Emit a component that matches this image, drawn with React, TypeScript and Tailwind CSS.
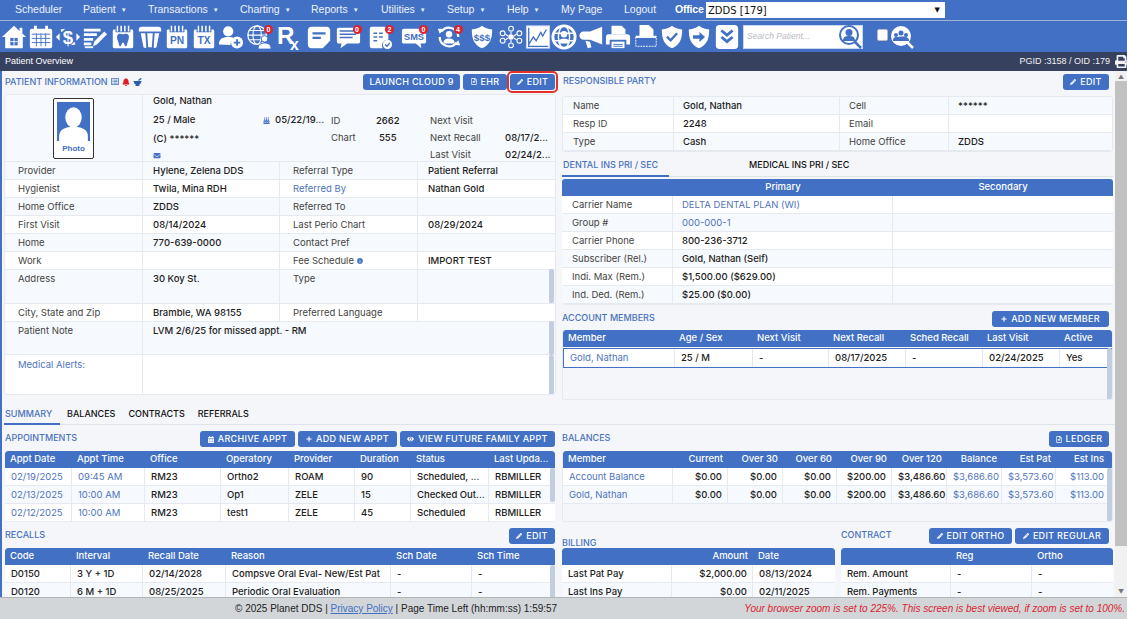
import type { ReactNode } from 'react';
import {
  FaBell, FaBirthdayCake, FaBullhorn, FaCalendarAlt, FaEnvelope, FaEye, FaInfoCircle,
  FaMortarPestle, FaPencilAlt, FaPlus, FaPrint, FaRegFileAlt, FaRegListAlt,
} from 'react-icons/fa';

const BLUE = '#4170c4';

const menu = [
  ['Scheduler', false], ['Patient', true], ['Transactions', true], ['Charting', true], ['Reports', true],
  ['Utilities', true], ['Setup', true], ['Help', true], ['My Page', false], ['Logout', false],
] as const;

const Ico = ({ children }: { children: ReactNode }) => (
  <svg viewBox="0 0 28 28" className="w-[26px] h-[26px]" fill="#fff">{children}</svg>
);

const Comb = () => (
  <>
    <rect x="3" y="6" width="22" height="20" rx="1.5" />
    <path d="M8 2v7M12 2v7M16 2v7M20 2v7" stroke={BLUE} strokeWidth="4" />
    <path d="M8 2v6M12 2v6M16 2v6M20 2v6" stroke="#fff" strokeWidth="1.6" />
  </>
);

const Shield = ({ children }: { children?: ReactNode }) => (
  <>
    <path d="M14 2c3 2.500 6.500 3.500 11 3.800 0 10-2.500 16.700-11 20.200C5.500 22.500 3 15.800 3 5.800 7.500 5.500 11 4.500 14 2z" />
    {children}
  </>
);

const Badge = ({ n }: { n: number }) => (
  <span className="absolute top-[1px] right-[-1px] w-[9px] h-[9px] rounded-full bg-[#d9232e] text-white text-[7px] leading-[9px] text-center font-bold font-['Liberation_Sans']">
    {n}
  </span>
);

const toolbar: { icon: ReactNode; badge?: number }[] = [
  { icon: <Ico><path d="M14 2 1 14h3.500v12h19V14H27L23 10.300V4h-3v3.500z" /><path d="M10 15h8v8h-8z" fill={BLUE} /><path d="M14 15v8M10 19h8" stroke="#fff" /></Ico> },
  { icon: <Ico><rect x="2" y="5" width="24" height="21" rx="2" /><path d="M8 2v5M20 2v5" stroke="#fff" strokeWidth="3" /><path d="M4 11h20M4 15.500h20M4 20h20M9 10v14M14 10v14M19 10v14" stroke={BLUE} strokeWidth="1" /></Ico> },
  { icon: <Ico><text x="14" y="21" textAnchor="middle" fontSize="20" fontWeight="700" className="font-['Liberation_Sans']">$</text><path d="m1 14 4-4v8zM27 14l-4-4v8zM6 6l5-1-4 4zM22 22l-5 1 4-4z" /></Ico> },
  { icon: <Ico><path d="M2 5h18v3H2zM2 10h14v3H2zM2 15h10v3H2zM2 20h8v3H2z" /><path d="m12 24 1-5L24 8l3 3-11 11z" /><path d="M3 25h9" stroke="#fff" strokeWidth="2" /></Ico> },
  { icon: <Ico><Comb /><path d="M9 11c2-1 3.500 0 5 0s3-1 5 0 1.500 5 .500 7-1 6-2.500 6-1.500-4-3-4-1.500 4-3 4-1.500-4-2.500-6-1.500-6 .500-7z" fill={BLUE} /></Ico> },
  { icon: <Ico><path d="M5 3h18c2 0 3 1 3 3v2H2V6c0-2 1-3 3-3z" /><path d="M4 10h5l1 15c0 1-2 1-3 0zM11 10h6l-1 15h-4zM19 10h5l-3 15c-1 1-3 1-3 0z" /></Ico> },
  { icon: <Ico><Comb /><text x="14" y="22" textAnchor="middle" fontSize="11" fontWeight="700" fill={BLUE} className="font-['Liberation_Sans']">PN</text></Ico> },
  { icon: <Ico><Comb /><text x="14" y="22" textAnchor="middle" fontSize="11" fontWeight="700" fill={BLUE} className="font-['Liberation_Sans']">TX</text></Ico> },
  { icon: <Ico><circle cx="11" cy="8" r="5.500" /><path d="M1 22c0-6 4-8 10-8 3 0 5 .500 6.500 1.500-3 2-4 4-4 7z" /><circle cx="20.500" cy="20" r="6.500" /><path d="M20.500 16.500v7M17 20h7" stroke={BLUE} strokeWidth="2" /></Ico> },
  { icon: <Ico><circle cx="12" cy="12" r="10" fill="none" stroke="#fff" strokeWidth="1.400" /><ellipse cx="12" cy="12" rx="4.500" ry="10" fill="none" stroke="#fff" strokeWidth="1.200" /><path d="M2 12h20M3.500 7h17M3.500 17h17" stroke="#fff" strokeWidth="1.200" /><circle cx="20" cy="16" r="3.500" stroke={BLUE} /><path d="M13 27c0-5 3-6.500 7-6.500s7 1.500 7 6.500z" stroke={BLUE} /></Ico>, badge: 0 },
  { icon: <Ico><text x="0" y="22" fontSize="26" fontWeight="700" className="font-['Liberation_Sans']">R</text><text x="14" y="28" fontSize="17" fontWeight="700" className="font-['Liberation_Sans']">x</text></Ico> },
  { icon: <Ico><path d="M6 3h16c2.500 0 4 1.500 4 4v11l-8 8H6c-2.500 0-4-1.500-4-4V7c0-2.500 1.500-4 4-4z" /><path d="M7 10h14M7 15h9" stroke={BLUE} strokeWidth="2.400" /></Ico> },
  { icon: <Ico><path d="M4 4h21c1 0 2 1 2 2v13c0 1-1 2-2 2H13l-7 5 1-5H4c-1 0-2-1-2-2V6c0-1 1-2 2-2z" /><path d="M5 7.500h18M5 11h18M5 14.500h14" stroke={BLUE} strokeWidth="1.500" /></Ico>, badge: 0 },
  { icon: <Ico><path d="M5 3h14l4 4v10a6 6 0 0 0-6 9H5c-1 0-2-1-2-2V5c0-1 1-2 2-2z" /><path d="M7 10h4M13 10h4M7 14h4M13 14h4M7 18h4" stroke={BLUE} strokeWidth="1.500" /><circle cx="22" cy="22" r="5" /><path d="m19.500 22 2 2 3-3.500" fill="none" stroke={BLUE} strokeWidth="1.400" /></Ico>, badge: 2 },
  { icon: <Ico><path d="M3 5h22c1 0 2 1 2 2v12c0 1-1 2-2 2h-4l1 5-6-5H3c-1 0-2-1-2-2V7c0-1 1-2 2-2z" /><text x="14" y="17" textAnchor="middle" fontSize="10" fontWeight="700" fill={BLUE} className="font-['Liberation_Sans']">SMS</text></Ico>, badge: 0 },
  { icon: <Ico><path d="M24 14a10 10 0 0 0-18-6M4 14a10 10 0 0 0 18 6" fill="none" stroke="#fff" strokeWidth="2.400" /><path d="m2 5 7 .500-5 5zM26 23l-7-.500 5-5z" /><circle cx="14" cy="11" r="3.500" /><path d="M8 21c0-4 2-5.500 6-5.500s6 1.500 6 5.500z" /></Ico>, badge: 4 },
  { icon: <Ico><Shield><text x="14" y="18" textAnchor="middle" fontSize="10.500" fontWeight="700" fill={BLUE} className="font-['Liberation_Sans']">$$$</text></Shield></Ico> },
  { icon: <Ico><circle cx="14" cy="14" r="3" /><g fill="none" stroke="#fff" strokeWidth="1.200"><circle cx="14" cy="5" r="2.600" /><circle cx="14" cy="23" r="2.600" /><circle cx="5" cy="10" r="2.600" /><circle cx="23" cy="10" r="2.600" /><circle cx="5" cy="18" r="2.600" /><circle cx="23" cy="18" r="2.600" /><path d="M14 8v3M14 17v3M8 11l3 2M20 11l-3 2M8 17l3-2M20 17l-3-2" /></g></Ico> },
  { icon: <Ico><rect x="1.500" y="2" width="25" height="24" fill="#fff" stroke="#c9d6ee" /><path d="M4 22 9 14l3 4 5-9 2 4 4-7M4 4v20h21" fill="none" stroke={BLUE} strokeWidth="1.400" /></Ico> },
  { icon: <Ico><circle cx="14" cy="14" r="12" fill="none" stroke="#fff" strokeWidth="3" /><path d="M2 10h24M2 18h24" stroke="#fff" strokeWidth="1.500" /><ellipse cx="14" cy="14" rx="6" ry="12" fill="none" stroke="#fff" strokeWidth="1.500" /><circle cx="14" cy="11" r="3.500" /><path d="M8 21c0-4 2-5 6-5s6 1 6 5z" /></Ico> },
  { icon: <Ico><path d="M26 3v19L13 17H6a4 4 0 0 1 0-9h7z" /><path d="m8 18 5 1 1.500 6-4 1z" /></Ico> },
  { icon: <Ico><path d="M7 2h11l4 4v5H7z" /><path d="M4 11h20c2 0 3 1 3 3v8h-4v-5H5v5H1v-8c0-2 1-3 3-3z" /><path d="M7 19h14v7H7z" /><path d="M9 22h10M9 24h10" stroke={BLUE} /></Ico> },
  { icon: <Ico><path d="M7 1h10l5 5v7H7z" /><path d="M3 13h22v11H3z" fill="none" stroke="#fff" strokeDasharray="2 1" /><path d="M3 13h22v2H3z" /></Ico> },
  { icon: <Ico><Shield><path d="m8.500 13.500 4 4 7-7.500" fill="none" stroke={BLUE} strokeWidth="2.600" /></Shield></Ico> },
  { icon: <Ico><Shield><path d="M7.500 12h7V8.500l6 5.500-6 5.500V16h-7z" fill={BLUE} /></Shield></Ico> },
  { icon: <Ico><rect x="2" y="1" width="24" height="26" rx="4" /><path d="m8 7 6 5 6-5M8 14l6 5 6-5" fill="none" stroke={BLUE} strokeWidth="3" /></Ico> },
];

const Btn = ({ icon, children, w }: { icon?: ReactNode; children: ReactNode; w: string }) => (
  <span className={`${w} h-[16px] flex items-center justify-center gap-[4px] rounded-[3px] bg-[#4170c4] text-white text-[9px] tracking-[0.3px] font-medium whitespace-nowrap`}>
    {icon}
    {children}
  </span>
);

const Title = ({ children }: { children: ReactNode }) => (
  <span className="text-[9px] font-medium text-[#4a72c0] whitespace-nowrap">{children}</span>
);

const pencil = <FaPencilAlt className="w-[6px] h-[6px]" />;

// one striped row, cells take their width from the grid template
const Row = ({ cols, cells, i, h = 'h-[18px]', cn = '' }: { cols: string; cells: ReactNode[]; i: number; h?: string; cn?: string }) => (
  <div className={`grid ${cols} ${h} ${i % 2 ? 'bg-white' : 'bg-[#f6f9fd]'} border-b border-[#e6eaf0] ${cn}`}>
    {cells.map((c, k) => (
      <div key={k} className="border-r border-[#e6eaf0] last:border-r-0 overflow-hidden whitespace-nowrap">{c}</div>
    ))}
  </div>
);

const T = ({ children, tone = 'v', right }: { children?: ReactNode; tone?: 'l' | 'v' | 'a'; right?: boolean }) => (
  <div className={`h-full pt-[3px] px-[6px] text-[9.5px] leading-[12px] ${right ? 'text-right pr-[5px]' : ''} ${tone === 'l' ? 'text-[#444]' : tone === 'a' ? 'text-[#4f74bd]' : 'text-[#222] font-medium'}`}>
    {children}
  </div>
);

const Head = ({ cols, cells, right = [] }: { cols: string; cells: string[]; right?: number[] }) => (
  <div className={`grid ${cols} h-[17px] bg-[#4170c4] rounded-t-[3px] items-center text-white text-[9.5px] font-medium`}>
    {cells.map((c, k) => (
      <div key={k} className={`px-[5px] whitespace-nowrap ${right.includes(k) ? 'text-right' : ''}`}>{c}</div>
    ))}
  </div>
);

const infoCols = 'grid-cols-[138px_137px_138px_137px]';
const info: [string, string, ReactNode, string][] = [
  ['Provider', 'Hylene, Zelena DDS', 'Referral Type', 'Patient Referral'],
  ['Hygienist', 'Twila, Mina RDH', <span className="text-[#4f74bd]">Referred By</span>, 'Nathan Gold'],
  ['Home Office', 'ZDDS', 'Referred To', ''],
  ['First Visit', '08/14/2024', 'Last Perio Chart', '08/29/2024'],
  ['Home', '770-639-0000', 'Contact Pref', ''],
  ['Work', '', <span className="flex items-center gap-[3px]">Fee Schedule <FaInfoCircle className="w-[6px] h-[6px] text-[#4170c4]" /></span>, 'IMPORT TEST'],
];

const InfoCell = ({ children, tone }: { children?: ReactNode; tone: 'l' | 'v' }) => (
  <div className={`pl-[4px] ${tone === 'l' ? 'ml-[3px]' : ''}`}><T tone={tone}>{children}</T></div>
);

const Thumb = ({ cn }: { cn: string }) => <div className={`absolute right-0 w-[5px] rounded-[2px] bg-[#c2cde0] ${cn}`} />;

const PatientPanel = () => (
  <div className="relative h-[301px] bg-white rounded-[3px] border border-[#e6eaf0] text-[9.5px] overflow-hidden">
    <div className="flex h-[67px] bg-[#f6f9fd] border-b border-[#e6eaf0]">
      <div className="w-[138px] flex justify-center items-center border-r border-[#e6eaf0]">
        <div className="w-[41px] h-[61px] border border-[#333] rounded-[2px] bg-white p-[3px] flex flex-col items-center">
          <div className="w-full h-[39px] bg-[#4170c4] overflow-hidden flex justify-center">
            <svg viewBox="0 0 32 38" className="w-full h-full" fill="#fff">
              <ellipse cx="16" cy="15" rx="8" ry="10" />
              <path d="M2 38v-5c0-6 6-9 14-9s14 3 14 9v5z" />
            </svg>
          </div>
          <span className="mt-[2px] text-[8px] leading-[12px] font-bold text-[#4170c4] font-['Liberation_Sans']">Photo</span>
        </div>
      </div>
      <div className="flex-1 flex pl-[10px]">
        <div className="w-[178px] text-[#222] font-medium leading-[12px] pt-[0px]">
          <div className="h-[15px]">Gold, Nathan</div>
          <div className="h-[18px] pt-[2px] flex items-center">
            <span className="w-[110px]">25 / Male</span>
            <FaBirthdayCake className="w-[7px] h-[7px] text-[#4170c4]" />
            <span className="ml-[5px]">05/22/19...</span>
          </div>
          <div className="h-[18px] pt-[5px]">(C) ******</div>
          <FaEnvelope className="w-[8px] h-[7px] mt-[6px] text-[#4170c4]" />
        </div>
        <div className="w-[99px] pt-[17px] leading-[17px] grid grid-cols-[45px_54px] grid-rows-[17px_17px]">
          <span className="text-[#444]">ID</span><span className="font-medium text-[#222]">2662</span>
          <span className="text-[#444]">Chart</span><span className="pl-[3px] font-medium text-[#222]">555</span>
        </div>
        <div className="flex-1 pt-[17px] leading-[17px] grid grid-cols-[75px_50px] grid-rows-[17px_17px_17px] whitespace-nowrap">
          <span className="text-[#444]">Next Visit</span><span />
          <span className="text-[#444]">Next Recall</span><span className="font-medium text-[#222]">08/17/2...</span>
          <span className="text-[#444]">Last Visit</span><span className="font-medium text-[#222]">02/24/2...</span>
        </div>
      </div>
    </div>
    {info.map((r, i) => (
      <Row key={i} i={i} cols={infoCols} cells={[
        <InfoCell tone="l">{r[0]}</InfoCell>, <InfoCell tone="v">{r[1]}</InfoCell>,
        <InfoCell tone="l">{r[2]}</InfoCell>, <InfoCell tone="v">{r[3]}</InfoCell>,
      ]} />
    ))}
    <Row i={0} h="h-[34px]" cols={infoCols} cells={[
      <InfoCell tone="l">Address</InfoCell>, <InfoCell tone="v">30 Koy St.</InfoCell>,
      <InfoCell tone="l">Type</InfoCell>, <InfoCell tone="v" />,
    ]} />
    <Row i={1} cols={infoCols} cells={[
      <InfoCell tone="l">City, State and Zip</InfoCell>, <InfoCell tone="v">Bramble, WA 98155</InfoCell>,
      <InfoCell tone="l">Preferred Language</InfoCell>, <InfoCell tone="v" />,
    ]} />
    <Row i={0} h="h-[33px]" cols="grid-cols-[138px_412px]" cells={[
      <InfoCell tone="l">Patient Note</InfoCell>, <InfoCell tone="v">LVM 2/6/25 for missed appt. - RM</InfoCell>,
    ]} />
    <div className="grid grid-cols-[138px_412px] h-[41px]">
      <div className="border-r border-[#e6eaf0] pl-[7px] pt-[1px]"><T tone="a">Medical Alerts:</T></div>
      <div />
    </div>
    <Thumb cn="top-[174px] h-[34px] mr-[1px]" />
    <Thumb cn="top-[226px] h-[34px] mr-[1px]" />
    <Thumb cn="top-[260px] h-[40px] mr-[1px]" />
  </div>
);

const RightTop = () => (
  <>
    <div className="bg-white rounded-[3px] border border-[#e6eaf0] overflow-hidden">
      {[
        ['Name', 'Gold, Nathan', 'Cell', '******'],
        ['Resp ID', '2248', 'Email', ''],
        ['Type', 'Cash', 'Home Office', 'ZDDS'],
      ].map((r, i) => (
        <Row key={i} i={i} cols="grid-cols-[111px_166px_109px_163px]" cells={[
          <div className="pl-[4px]"><T tone="l">{r[0]}</T></div>, <div className="pl-[3px]"><T>{r[1]}</T></div>,
          <div className="pl-[3px]"><T tone="l">{r[2]}</T></div>, <div className="pl-[3px]"><T>{r[3]}</T></div>,
        ]} />
      ))}
    </div>
    <div className="flex h-[23px] mt-[2px] border-b border-[#dfe3ea] text-[9px] font-medium">
      <span className="w-[107px] h-[23px] pt-[4px] pl-[1px] text-[#4a72c0] border-b-2 border-[#4170c4] whitespace-nowrap">DENTAL INS PRI / SEC</span>
      <span className="ml-[80px] pt-[4px] text-[#111] whitespace-nowrap">MEDICAL INS PRI / SEC</span>
    </div>
    <div className="mt-[2px] bg-white rounded-[3px] overflow-hidden border-b border-[#e6eaf0]">
      <div className="grid grid-cols-[111px_220px_220px] h-[17px] bg-[#4170c4] items-center text-center text-white text-[9.5px] font-medium">
        <span /><span>Primary</span><span>Secondary</span>
      </div>
      {([
        ['Carrier Name', 'DELTA DENTAL PLAN (WI)', 'a'],
        ['Group #', '000-000-1', 'a'],
        ['Carrier Phone', '800-236-3712', 'v'],
        ['Subscriber (Rel.)', 'Gold, Nathan (Self)', 'v'],
        ['Indi. Max (Rem.)', '$1,500.00 ($629.00)', 'v'],
        ['Ind. Ded. (Rem.)', '$25.00 ($0.00)', 'v'],
      ] as const).map((r, i) => (
        <Row key={i} i={i + 1} cols="grid-cols-[111px_220px_220px]" cells={[
          <div className="pl-[4px]"><T tone="l">{r[0]}</T></div>, <div className="pl-[3px]"><T tone={r[2]}>{r[1]}</T></div>, <span />,
        ]} />
      ))}
    </div>
  </>
);

const Members = () => {
  const cols = 'grid-cols-[111px_78px_76px_77px_77px_77px_55px]';
  return (
    <div className="relative h-[70px] rounded-[3px] border-b border-x border-[#e6eaf0] overflow-hidden">
      <Head cols={cols} cells={['Member', 'Age / Sex', 'Next Visit', 'Next Recall', 'Sched Recall', 'Last Visit', 'Active']} />
      <div className={`grid ${cols} h-[20px] mt-[1px] bg-white border border-[#4170c4]`}>
        {[<T tone="a">Gold, Nathan</T>, <T>25 / M</T>, <T>-</T>, <T>08/17/2025</T>, <T>-</T>, <T>02/24/2025</T>, <T>Yes</T>].map((c, k) => (
          <div key={k} className="border-r border-[#e6eaf0] last:border-r-0 overflow-hidden whitespace-nowrap">{c}</div>
        ))}
      </div>
      <Thumb cn="top-[18px] h-[52px]" />
    </div>
  );
};

const Appointments = () => {
  const cols = 'grid-cols-[67px_73px_76px_68px_66px_56px_78px_66px]';
  const rows = [
    ['02/19/2025', '09:45 AM', 'RM23', 'Ortho2', 'ROAM', '90', 'Scheduled, ...', 'RBMILLER'],
    ['02/13/2025', '10:00 AM', 'RM23', 'Op1', 'ZELE', '15', 'Checked Out...', 'RBMILLER'],
    ['02/12/2025', '10:00 AM', 'RM23', 'test1', 'ZELE', '45', 'Scheduled', 'RBMILLER'],
  ];
  return (
    <div className="relative h-[71px] rounded-[3px] overflow-hidden bg-white border-b border-[#e6eaf0]">
      <Head cols={cols} cells={['Appt Date', 'Appt Time', 'Office', 'Operatory', 'Provider', 'Duration', 'Status', 'Last Upda...']} />
      {rows.map((r, i) => (
        <Row key={i} i={i + 1} cols={cols} cells={r.map((c, k) => <T tone={k < 2 ? 'a' : 'v'}>{c}</T>)} />
      ))}
      <Thumb cn="top-[17px] h-[34px]" />
    </div>
  );
};

const Recalls = () => {
  const cols = 'grid-cols-[66px_72px_83px_165px_81px_83px]';
  return (
    <div className="relative h-[54px] rounded-t-[3px] overflow-hidden bg-white">
      <Head cols={cols} cells={['Code', 'Interval', 'Recall Date', 'Reason', 'Sch Date', 'Sch Time']} />
      <Row i={1} cols={cols} cells={['D0150', '3 Y + 1D', '02/14/2028', 'Compsve Oral Eval- New/Est Pat', '-', '-'].map(c => <T>{c}</T>)} />
      <Row i={0} cols={cols} cells={['D0120', '6 M + 1D', '08/25/2025', 'Periodic Oral Evaluation', '-', '-'].map(c => <T>{c}</T>)} />
      <Thumb cn="top-[17px] h-[37px]" />
    </div>
  );
};

const Balances = () => {
  const cols = 'grid-cols-[110px_55px_55px_54px_55px_55px_55px_54px_53px]';
  const nums = ['$0.00', '$0.00', '$0.00', '$200.00', '$3,486.60', '$3,686.60', '$3,573.60', '$113.00'];
  return (
    <div className="relative h-[71px] rounded-[3px] overflow-hidden border-b border-x border-[#e6eaf0]">
      <Head cols={cols} right={[1, 2, 3, 4, 5, 6, 7, 8]} cells={['Member', 'Current', 'Over 30', 'Over 60', 'Over 90', 'Over 120', 'Balance', 'Est Pat', 'Est Ins']} />
      {['Account Balance', 'Gold, Nathan'].map((m, i) => (
        <Row key={m} i={i + 1} cols={cols} cells={[
          <T tone="a">{m}</T>,
          ...nums.map((n, k) => <T right tone={k > 4 ? 'a' : 'v'}>{n}</T>),
        ]} />
      ))}
      <Thumb cn="top-[17px] h-[54px]" />
    </div>
  );
};

const Billing = () => {
  const cols = 'grid-cols-[110px_81px_82px]';
  return (
    <div className="h-[54px] rounded-t-[3px] overflow-hidden bg-white">
      <Head cols={cols} right={[1]} cells={['', 'Amount', 'Date']} />
      <Row i={1} cols={cols} cells={[<T>Last Pat Pay</T>, <T right>$2,000.00</T>, <T>08/13/2024</T>]} />
      <Row i={0} cols={cols} cells={[<T>Last Ins Pay</T>, <T right>$0.00</T>, <T>02/11/2025</T>]} />
    </div>
  );
};

const Contract = () => {
  const cols = 'grid-cols-[110px_81px_81px]';
  return (
    <div className="h-[54px] rounded-t-[3px] overflow-hidden bg-white">
      <Head cols={cols} cells={['', 'Reg', 'Ortho']} />
      <Row i={1} cols={cols} cells={[<T>Rem. Amount</T>, <T>-</T>, <T>-</T>]} />
      <Row i={0} cols={cols} cells={[<T>Rem. Payments</T>, <T>-</T>, <T>-</T>]} />
    </div>
  );
};

export default function App() {
  return (
    <div className="w-[1127px] h-[619px] overflow-hidden flex flex-col bg-[#f4f6f9] font-['Inter',sans-serif]">
      <div className="h-[20px] bg-[#4170c4] flex items-center pl-[15px] font-['Liberation_Sans',sans-serif] text-[10.500px] text-[#eef2fa]">
        <div className="grid grid-cols-[68px_65px_92px_71px_70px_66px_60px_54px_63px_51px_31px] items-center">
          {menu.map(([label, caret]) => (
            <span key={label} className="whitespace-nowrap">
              {label}
              {caret && <span className="ml-[5px] text-[6px] align-[1px]">▼</span>}
            </span>
          ))}
          <span className="font-bold text-white tracking-[-0.2px]">Office</span>
        </div>
        <div className="ml-[0px] w-[239px] h-[16px] bg-white flex items-center justify-between px-[2px] text-[10px] text-[#111] font-['DejaVu_Sans',sans-serif]">
          ZDDS [179]
          <span className="text-[7px] mr-[3px]">▼</span>
        </div>
      </div>
      <div className="h-[32px] bg-[#4170c4] border-t border-[#9fb2d4] flex items-center">
        <div className="grid grid-cols-[27px_27px_27px_28px_27px_27px_27px_27px_27px_30px_31px_27px_31px_34px_34px_35px_31px_28px_26px_26px_27px_28px_27px_26px_28px_28px] justify-items-center items-center">
          {toolbar.map((t, i) => (
            <div key={i} className="relative">
              {t.icon}
              {t.badge !== undefined && <Badge n={t.badge} />}
            </div>
          ))}
        </div>
        <div className="ml-[2px] w-[120px] h-[24px] bg-white flex items-center justify-between border border-[#c9d6ee]">
          <span className="pl-[3px] text-[8.500px] italic text-[#b9bcc2] font-['Liberation_Sans']">Search Patient...</span>
          <svg viewBox="0 0 24 24" className="w-[24px] h-[24px]">
            <circle cx="11" cy="10" r="9" fill="#fff" stroke={BLUE} strokeWidth="2" />
            <circle cx="11" cy="7.500" r="3.500" fill={BLUE} />
            <path d="M5 16c0-4 2-5 6-5s6 1 6 5z" fill={BLUE} />
            <path d="m17 17 6 6" stroke={BLUE} strokeWidth="2.500" />
          </svg>
        </div>
        <span className="ml-[14px] w-[11px] h-[12px] bg-white rounded-[2px] border border-[#bbb] mb-[4px]" />
        <svg viewBox="0 0 24 24" className="ml-[2px] w-[24px] h-[24px]">
          <circle cx="11" cy="11" r="10" fill="#fff" />
          <circle cx="11" cy="8" r="2.500" fill={BLUE} />
          <circle cx="6" cy="10" r="2" fill={BLUE} />
          <circle cx="16" cy="10" r="2" fill={BLUE} />
          <path d="M3 16c0-3 1-4 3-4s8-1 10 0 3 1 3 4z" fill={BLUE} />
          <path d="m17 17 6 6" stroke="#fff" strokeWidth="2.500" />
        </svg>
      </div>
      <div className="h-[19px] bg-[#36415f] flex items-center justify-between pl-[5px] text-white text-[9px] font-['Liberation_Sans',sans-serif]">
        <span>Patient Overview</span>
        <span className="flex items-center gap-[5px] font-bold text-[#f2f2f2] font-normal">
          PGID :3158 / OID :179
          <FaPrint className="w-[13px] h-[13px] mr-[-1px]" />
        </span>
      </div>

      <div className="flex-1 min-h-0 flex border-l-2 border-[#4170c4]">
        <div className="w-[1113px] pl-[2px] overflow-hidden">
          <div className="grid grid-cols-[552px_551px] gap-x-[6px]">
            <div>
              <div className="h-[23px] flex items-center justify-between pb-[2px] pl-[1px]">
                <div className="flex items-center gap-[3px]">
                  <Title>PATIENT INFORMATION</Title>
                  <FaRegListAlt className="w-[8px] h-[9px] text-[#4170c4]" />
                  <FaBell className="w-[8px] h-[8px] text-[#e01b24]" />
                  <FaMortarPestle className="w-[9px] h-[8px] text-[#2f5cb0]" />
                </div>
                <div className="flex items-center gap-[3px] pr-[1px]">
                  <Btn w="w-[97px]">LAUNCH CLOUD 9</Btn>
                  <Btn w="w-[44px]" icon={<FaRegFileAlt className="w-[6px] h-[7px]" />}>EHR</Btn>
                  <div className="relative">
                    <Btn w="w-[45px]" icon={pencil}>EDIT</Btn>
                    <div className="absolute -inset-x-[3px] -inset-y-[3px] rounded-[5px] border-[2px] border-[#e0332d]" />
                  </div>
                </div>
              </div>
              <PatientPanel />
            </div>
            <div>
              <div className="h-[25px] flex items-start justify-between pt-[3px] pr-[4px] pl-[1px]">
                <Title>RESPONSIBLE PARTY</Title>
                <Btn w="w-[46px]" icon={pencil}>EDIT</Btn>
              </div>
              <RightTop />
              <div className="h-[25px] flex items-start justify-between pt-[6px] pr-[4px]">
                <Title>ACCOUNT MEMBERS</Title>
                <Btn w="w-[117px]" icon={<FaPlus className="w-[6px] h-[6px]" />}>ADD NEW MEMBER</Btn>
              </div>
              <Members />
            </div>
          </div>

          <div className="flex h-[25px] border-b border-[#dfe3ea] text-[9px] font-medium text-[#111]">
            <span className="w-[56px] h-[25px] pt-[7px] pl-[1px] text-[#4a72c0] border-b-2 border-[#4170c4]">SUMMARY</span>
            <span className="ml-[7px] pt-[7px]">BALANCES</span>
            <span className="ml-[13px] pt-[7px]">CONTRACTS</span>
            <span className="ml-[13px] pt-[7px]">REFERRALS</span>
          </div>

          <div className="grid grid-cols-[552px_551px] gap-x-[6px]">
            <div className="pl-[1px] pr-[1px]">
              <div className="h-[26px] flex items-start justify-between pt-[6px]">
                <Title>APPOINTMENTS</Title>
                <div className="flex gap-[3px]">
                  <Btn w="w-[95px]" icon={<FaCalendarAlt className="w-[6px] h-[7px]" />}>ARCHIVE APPT</Btn>
                  <Btn w="w-[99px]" icon={<FaPlus className="w-[6px] h-[6px]" />}>ADD NEW APPT</Btn>
                  <Btn w="w-[155px]" icon={<FaEye className="w-[7px] h-[6px]" />}>VIEW FUTURE FAMILY APPT</Btn>
                </div>
              </div>
              <Appointments />
              <div className="h-[26px] flex items-start justify-between pt-[6px]">
                <Title>RECALLS</Title>
                <Btn w="w-[46px]" icon={pencil}>EDIT</Btn>
              </div>
              <Recalls />
            </div>
            <div>
              <div className="h-[26px] flex items-start justify-between pt-[6px] pr-[4px]">
                <Title>BALANCES</Title>
                <Btn w="w-[60px]" icon={<FaRegFileAlt className="w-[6px] h-[7px]" />}>LEDGER</Btn>
              </div>
              <Balances />
              <div className="grid grid-cols-[273px_272px] gap-x-[6px]">
                <div>
                  <div className="h-[26px] pt-[6px]"><Title>BILLING</Title></div>
                  <Billing />
                </div>
                <div>
                  <div className="h-[26px] flex items-start justify-between pt-[6px] pr-[4px]">
                    <Title>CONTRACT</Title>
                    <div className="flex gap-[3px]">
                      <Btn w="w-[83px]" icon={pencil}>EDIT ORTHO</Btn>
                      <Btn w="w-[94px]" icon={pencil}>EDIT REGULAR</Btn>
                    </div>
                  </div>
                  <Contract />
                </div>
              </div>
            </div>
          </div>
        </div>
        <div className="w-[12px] bg-[#f1f1f1] flex flex-col items-center text-[6px] text-[#777]">
          <span className="h-[10px] leading-[12px]">▲</span>
          <div className="w-full h-[465px] bg-[#c1c1c1]" />
          <span className="mt-auto h-[10px] leading-[10px]">▼</span>
        </div>
      </div>

      <div className="h-[22px] bg-[#d3d6d9] border-t border-[#b3b6b9] flex items-center justify-between pr-[2px] font-['Liberation_Sans',sans-serif]">
        <span className="ml-[235px] text-[10px] text-[#222]">
          © 2025 Planet DDS | <span className="text-[#4170c4] underline">Privacy Policy</span> | Page Time Left (hh:mm:ss) 1:59:57
        </span>
        <span className="text-[10px] italic text-[#d9232e]">Your browser zoom is set to 225%. This screen is best viewed, if zoom is set to 100%.</span>
      </div>
    </div>
  );
}
